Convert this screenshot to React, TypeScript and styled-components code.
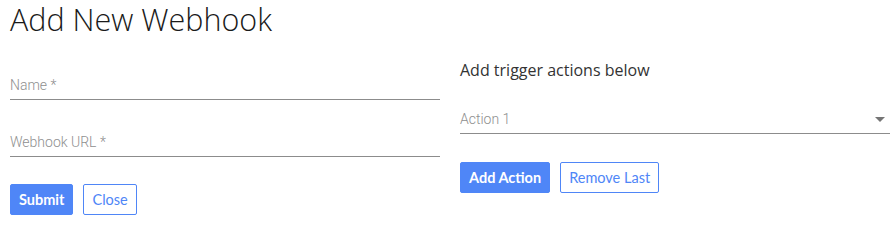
import React from "react"
import styled, { createGlobalStyle } from "styled-components"

const GlobalStyle = createGlobalStyle`
	html, body {
		margin: 0;
		padding: 0;
		background: #fff;
	}
	body {
		font-family: "Open Sans", "Liberation Sans", sans-serif;
	}
`

const Page = styled.div`
	display: grid;
	grid-template-columns: 430px 430px;
	column-gap: 20px;
	padding: 0 5px 0 10px;
`

const Title = styled.h1`
	grid-column: 1 / -1;
	margin: 0;
	padding-top: 1px;
	font-family: "Open Sans", sans-serif;
	font-weight: 300;
	font-size: 30.5px;
	line-height: 37px;
	color: #1a1a1a;
`

const Column = styled.div`
	display: flex;
	flex-direction: column;
`

const Heading = styled.h2`
	margin: 21px 0 0;
	font-family: "Open Sans", sans-serif;
	font-weight: 400;
	font-size: 16px;
	line-height: 22px;
	color: #333;
`

const Field = styled.label<{ $height: number }>`
	display: flex;
	align-items: flex-end;
	justify-content: space-between;
	height: ${(p) => p.$height}px;
	box-sizing: border-box;
	padding-bottom: 5px;
	border-bottom: 1px solid #8c8c8c;
	cursor: text;
`

const Placeholder = styled.span`
	font-family: Roboto, "Liberation Sans", sans-serif;
	font-weight: 300;
	font-size: 14px;
	line-height: 17px;
	color: #8f8f8f;
`

const Caret = styled.span`
	width: 0;
	height: 0;
	margin: 0 5px 6px 0;
	border-left: 5px solid transparent;
	border-right: 5px solid transparent;
	border-top: 5px solid #757575;
`

const Actions = styled.div<{ $top: number }>`
	display: flex;
	gap: 10px;
	margin-top: ${(p) => p.$top}px;
`

const Button = styled.button<{ $primary?: boolean }>`
	height: 31px;
	padding: 0 8px;
	border: 1px solid #4f86f7;
	border-radius: 2px;
	background: ${(p) => (p.$primary ? "#4f86f7" : "#fff")};
	color: ${(p) => (p.$primary ? "#fff" : "#4f86f7")};
	font-family: Lato, "Open Sans", sans-serif;
	font-weight: ${(p) => (p.$primary ? 700 : 400)};
	font-size: 14.5px;
	cursor: pointer;
`

export default function App() {
	return (
		<>
			<GlobalStyle />
			<Page>
				<Title>Add New Webhook</Title>
				<Column>
					<Field $height={62}>
						<Placeholder>Name *</Placeholder>
					</Field>
					<Field $height={57}>
						<Placeholder>Webhook URL *</Placeholder>
					</Field>
					<Actions $top={27}>
						<Button $primary>Submit</Button>
						<Button>Close</Button>
					</Actions>
				</Column>
				<Column>
					<Heading>Add trigger actions below</Heading>
					<Field $height={53}>
						<Placeholder>Action 1</Placeholder>
						<Caret />
					</Field>
					<Actions $top={28}>
						<Button $primary>Add Action</Button>
						<Button>Remove Last</Button>
					</Actions>
				</Column>
			</Page>
		</>
	)
}
